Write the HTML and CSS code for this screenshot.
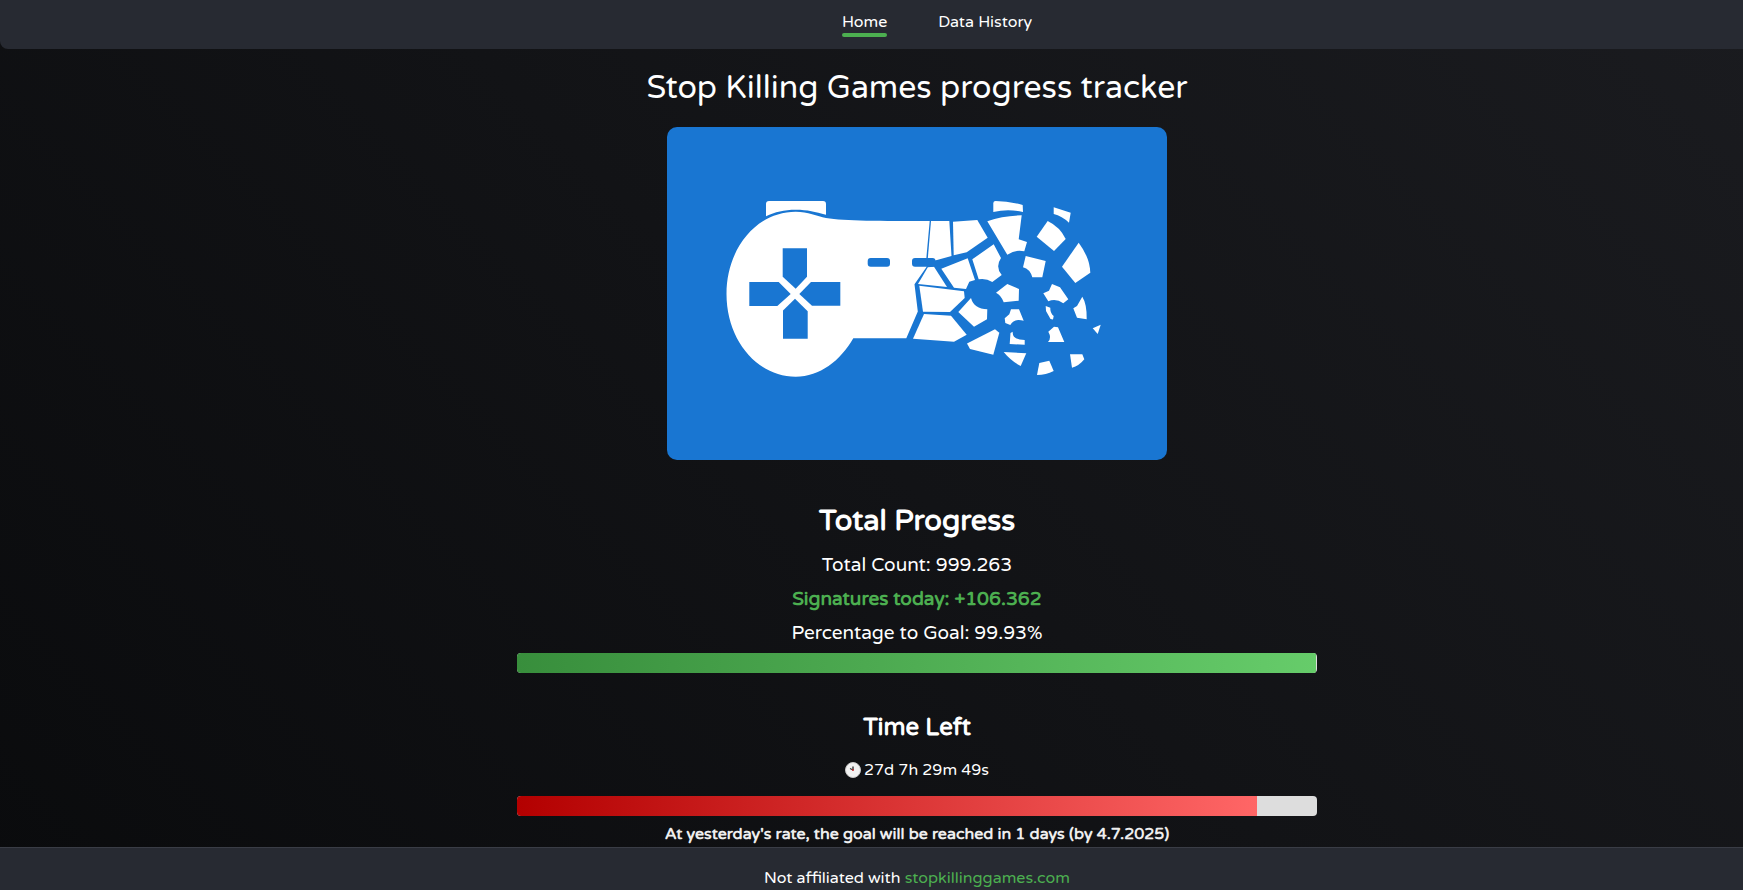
FILE: index.html
```html
<!DOCTYPE html>
<html lang="en">
<head>
    <meta charset="UTF-8">
    <meta name="viewport" content="width=device-width, initial-scale=1.0">
    <title>Stop Killing Games progress tracker</title>
    <link rel="stylesheet" href="styles.css">
</head>
<body>
    <header class="header">
        <nav>
            <ul class="nav-list">
                <li><a class="nav-link active" href="#">Home</a></li>
                <li><a class="nav-link" href="#history">Data History</a></li>
            </ul>
        </nav>
    </header>

    <main class="container">
        <h1>Stop Killing Games progress tracker</h1>

        <svg class="logo" viewBox="667 127 500 333" role="img" aria-label="Stop Killing Games logo">
            <rect x="667" y="127" width="500" height="333" fill="#1976d2"/>
            <g fill="#fff">
                <!-- shoulder button -->
                <path d="M766 216.3V204q0-3 3-3H823q3 0 3 3V214.7C815 212 808 209.7 795.7 209.7C784 209.7 775 212 766 216.3Z"/>
                <!-- left half -->
                <path d="M795.7 211.7C808 211.7 817 216 826 218C845 221 880 221 929.7 221L926 262L926.7 266.7L914.5 284.3L917.8 311.5L906.3 338.3H853.3C840 361 820 376.7 795.7 376.7C757 376.7 726.5 340 726.5 294C726.5 248 757 211.7 795.7 211.7Z"/>
                <!-- shards -->
                <path d="M931 221H949.3L951.5 256L937 260L927.5 262Z"/>
                <path d="M953 221.7L977.3 220L987.7 237.7L966.7 252.3L953.7 255.3Z"/>
                <path d="M941.3 268.7L967.7 258.3L975 280L969.3 281.7L966 289L954 287.7Z"/>
                <path d="M934 266.7L947 287L918 284L927.8 267.3Z"/>
                <path d="M919.3 285.7L964 291.3L964.7 298L950 312L923 311.7Z"/>
                <path d="M924 314L951 315.7L966.7 334.7L954 341.7L913 338.7Z"/>
                <path d="M972.3 259.3L993.7 244.3L1001 258Q995 267 1001.7 275L992.3 282Q986 278 978.7 279.3Z"/>
                <path d="M958.3 312L971 298Q974 309 987.3 309.3L987 319.3L974 326.7Z"/>
                <path d="M995 329.3L999.3 332.7L993.3 354.7L970 349L967 343.5Z"/>
                <path d="M996 292.7L1007.3 284L1019 289L1018.7 300.7L1003.7 302.3Q1001 295 996 292.7Z"/>
                <path d="M1004.7 318.3L1009.3 314.3L1011 309.3H1019L1023.7 320.7Q1014 318 1010.3 325L1005.3 323Z"/>
                <path d="M1012.7 331.7Q1012 340 1024.7 340V344.7L1009.7 344L1010.5 333Z"/>
                <path d="M1003.7 352L1026.3 353.3L1020.7 366Q1011 361 1003.7 352Z"/>
                <path d="M1039.3 363L1049.3 360.7L1053.7 371Q1046 375 1037 375Z"/>
                <path d="M1070 354.3H1082.3L1084.3 359.3Q1079 366 1072 367.7Z"/>
                <path d="M1048.3 331.7L1054 326.7L1058 327.3L1064.3 342H1048Q1052 338 1048.3 331.7Z"/>
                <path d="M1045.7 306L1050.3 307.7Q1050 313 1053.7 316L1053 319.5L1050.5 319L1046 311Z"/>
                <path d="M1043.3 293.3L1049 290.7L1052 284L1060 287.3L1068.3 299.3L1063.3 303.3Q1056 298 1048.3 301.3Z"/>
                <path d="M1082.3 296.7Q1087 304 1086.7 319.3L1077 317.7L1073.3 308.3L1077 306Z"/>
                <path d="M1092.7 328.3L1100.7 324.7L1097.7 334Z"/>
                <path d="M995.5 201Q1008 201 1022.7 205L1023 212Q1008 208.5 993.3 212V203Q993.5 201 995.5 201Z"/>
                <path d="M987.3 221.3Q1003 215.5 1021.7 215.3L1018.7 239.3L1027 242L1024.3 251.3Q1016 249 1007.3 254.7Z"/>
                <path d="M1053.7 207.3L1070.7 212.7L1069 222.7Q1062 216 1053.7 214Z"/>
                <path d="M1047.7 221Q1060 227 1065.7 239L1054 251L1036.7 236.7Z"/>
                <path d="M1078.7 242.7Q1090 258 1090.3 272.7L1075.3 283L1062 266.7Z"/>
                <path d="M1025.7 256L1045.7 261L1042.3 277.3H1032.3Q1030 269 1023 267.3Z"/>
            </g>
            <!-- d-pad and buttons -->
            <g fill="#1976d2">
                <path d="M782.7 248.3H807V276.7L795.7 288.7L782.7 276.7Z"/>
                <path d="M749.3 282H778.7L790.7 294L777.3 306H749.3Z"/>
                <path d="M840.3 282H811L799.3 294L812 305.7H840.3Z"/>
                <path d="M795 298.7L807.7 311.3V338.7H783V310.5Z"/>
                <rect x="867.7" y="258" width="22.3" height="8.7" rx="3"/>
                <rect x="912" y="258" width="23.5" height="8.7" rx="3"/>
            </g>
        </svg>

        <section class="progress">
            <h2>Total Progress</h2>
            <p>Total Count: 999.263</p>
            <p class="today">Signatures today: +106.362</p>
            <p>Percentage to Goal: 99.93%</p>
            <div class="bar">
                <div class="bar-fill green" style="width: 99.93%"></div>
            </div>
        </section>

        <section class="time">
            <h3>Time Left</h3>
            <p class="countdown">
                <svg class="clock" viewBox="0 0 16 16" aria-hidden="true">
                    <circle cx="8" cy="8" r="7.5" fill="#f2f2f2" stroke="#c8c8c8"/>
                    <path d="M8 8V4.5" stroke="#333" stroke-width="1.4"/>
                    <path d="M8 8L5 6.5" stroke="#333" stroke-width="1.2"/>
                    <circle cx="8" cy="8" r="1" fill="#c62828"/>
                </svg>
                <span>27d 7h 29m 49s</span>
            </p>
            <div class="bar">
                <div class="bar-fill red" style="width: 92.5%"></div>
            </div>
            <p class="estimate">At yesterday's rate, the goal will be reached in 1 days (by 4.7.2025)</p>
        </section>
    </main>

    <footer class="footer">
        <p>Not affiliated with <a href="https://www.stopkillinggames.com">stopkillinggames.com</a></p>
    </footer>
</body>
</html>
```
FILE: styles.css
```css
* {
    box-sizing: border-box;
}
body {
    margin: 0;
    min-height: 100vh;
    font-family: "Varela Round", "Noto Sans", sans-serif;
    font-size: 16px;
    color: #fff;
    background: linear-gradient(45deg, #0a0b0d, #1a1b1f);
}
h1, h2, h3, p {
    margin: 0;
}
.header {
    padding: 12px 0 12px 91px;
    background-color: #272a32;
    border-bottom-left-radius: 8px;
}
.nav-list {
    display: flex;
    justify-content: center;
    gap: 51px;
    margin: 0;
    padding: 0 0 0 40px;
    list-style: none;
}
.nav-link {
    display: block;
    line-height: 21px;
    color: #fff;
    text-decoration: none;
}
.nav-link::after {
    content: "";
    display: block;
    height: 4px;
    border-radius: 2px;
}
.nav-link.active::after {
    background-color: #4caf50;
}
.container {
    display: flex;
    flex-direction: column;
    align-items: center;
    padding: 19px 0 1px 91px;
    text-align: center;
}
h1 {
    font-size: 32px;
    line-height: 40px;
    font-weight: 400;
}
.logo {
    display: block;
    width: 100%;
    max-width: 500px;
    margin-top: 19px;
    border-radius: 10px;
}
.progress, .time {
    width: 100%;
    max-width: 800px;
}
.progress {
    margin-top: 43px;
    font-size: 19px;
    line-height: 34px;
}
h2 {
    margin-bottom: 9px;
    font-size: 29px;
    line-height: 36px;
    font-weight: 700;
}
.today {
    font-weight: 700;
    color: #4caf50;
}
.bar {
    height: 20px;
    border-radius: 4px;
    background-color: #ddd;
    overflow: hidden;
}
.progress .bar {
    margin-top: 3px;
}
.bar-fill {
    height: 100%;
}
.bar-fill.green {
    background: linear-gradient(90deg, #388e3c, #66cc6a);
}
.bar-fill.red {
    background: linear-gradient(90deg, #b30000, #ff6666);
}
.time {
    margin-top: 39px;
    line-height: 24px;
}
h3 {
    font-size: 24px;
    line-height: 32px;
    font-weight: 700;
}
.countdown {
    display: flex;
    justify-content: center;
    align-items: center;
    gap: 3px;
    margin: 14px 0;
}
.clock {
    width: 16px;
    height: 16px;
}
.estimate {
    margin-top: 6px;
    font-weight: 700;
    color: #eee;
}
.footer {
    padding: 19px 0 0 91px;
    border-top: 1px solid #3a3d46;
    background-color: #272a32;
    line-height: 23px;
    text-align: center;
}
.footer a {
    color: #4caf50;
    text-decoration: none;
}
```
